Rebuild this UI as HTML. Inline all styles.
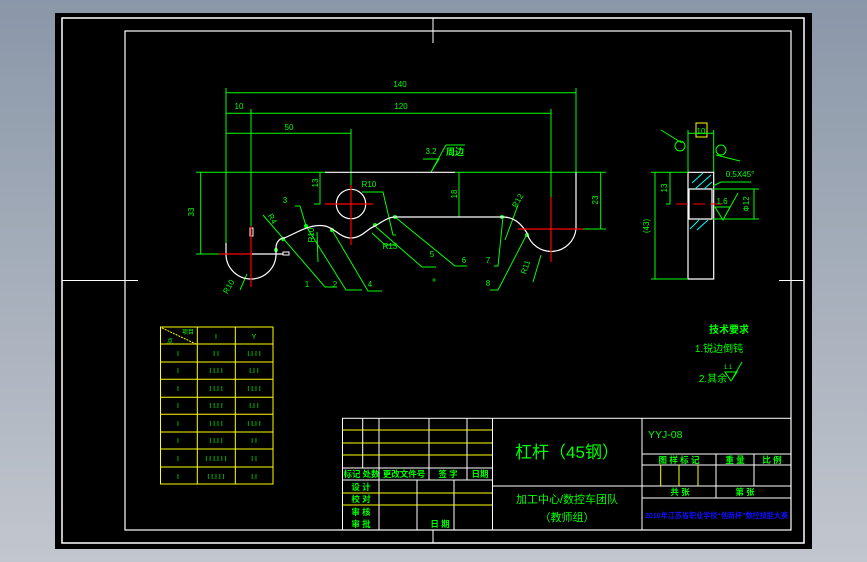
<!DOCTYPE html>
<html><head><meta charset="utf-8"><style>
html,body{margin:0;padding:0;width:867px;height:562px;overflow:hidden;background:linear-gradient(#8a97a8,#c2c6ce);}
svg{position:absolute;left:0;top:0}
text{font-family:"Liberation Sans","Noto Sans CJK SC",sans-serif;}
</style></head><body>
<svg width="867" height="562" viewBox="0 0 867 562" xmlns="http://www.w3.org/2000/svg">
<rect x="55" y="13" width="757" height="536" fill="#000"/>
<g fill="none" stroke="#fff">
<rect x="62" y="18" width="742" height="525" stroke-width="1.5"/>
<rect x="125" y="31" width="666" height="499" stroke-width="1.2"/>
<path d="M433 18V43M62 280.5H138M779 280.5H804M433 530V543"/>
</g>
<g stroke="#0f0" fill="none" stroke-width="1">
<path d="M226 88V243M576 88V172M226 92.7H576M251 109V226M551 109V197M226 113.3H551M351 129V189M226 133.3H351"/>
<path d="M196 172.3H325M455 172.3H606M196 254H219M583 229H606M200.7 172V254M600.7 172V229M320 172V204H314M459 172V217"/>
<path d="M423 159H439L431 172L446 145H465"/>
<path d="M362 192H383L393 235H396M295 206H300L306 226M263 215L325 287H337M306 226L346 290H362M332 230L368 291H382M376 227L422 267H436M395 217L455 266H467M503 217L498 266H494M527 234L498 290H490M518 205L505 240M541 255L533 282M240 290L247 274M317 232L318 262"/>
<path d="M372 233L385 245H397"/>
</g>
<g fill="#0f0">
<circle cx="276" cy="250" r="2"/><circle cx="283" cy="239" r="2"/><circle cx="306" cy="226" r="2"/><circle cx="332" cy="230" r="2"/><circle cx="375" cy="225" r="2"/><circle cx="395" cy="217" r="2"/><circle cx="502" cy="217" r="2"/><circle cx="527" cy="235" r="2"/>
</g>
<g fill="none" stroke="#fff" stroke-width="1.2">
<path d="M325 172.3H455M226 243V254A25 25 0 0 0 276 254V248C276 242 280 238 284 238C295 234 310 223 325 226C335 228 340 238 351 238C362 238 368 228 375 226C382 222 388 217 395 217H503C515 217 522 225 527 233A25 25 0 0 0 576 229V172M251 254H283"/>
<circle cx="351" cy="204" r="14.7"/>
<path d="M250 228h3v8h-3zM283 252h6v3h-6z" stroke-width="1"/>
</g>
<g stroke="#f00" stroke-width="1.2">
<path d="M219 254H252M251 226V287M325 204H373M351 185V245M518 229H583M551 197V262"/>
</g>
<g fill="#0f0" font-size="8" text-anchor="middle">
<text x="400" y="87">140</text><text x="239" y="109">10</text><text x="401" y="109">120</text><text x="289" y="130">50</text>
<text x="431" y="154">3.2</text><text x="455" y="155" font-size="9" font-weight="bold">周边</text>
<text x="369" y="187">R10</text><text x="390" y="249">R13</text>
<text x="285" y="203">3</text><text x="307" y="287">1</text><text x="335" y="287">2</text><text x="370" y="287">4</text>
<text x="432" y="257">5</text><text x="464" y="263">6</text><text x="488" y="263">7</text><text x="488" y="286">8</text>
<text transform="translate(318,183) rotate(-90)">13</text>
<text transform="translate(457,194) rotate(-90)">18</text>
<text transform="translate(194,212) rotate(-90)">33</text>
<text transform="translate(598,200) rotate(-90)">23</text>
<text transform="translate(314,235) rotate(-90)">R10</text>
<text transform="translate(270,220) rotate(60)">R4</text>
<text transform="translate(520,202) rotate(-60)">R12</text>
<text transform="translate(528,268) rotate(-70)">R11</text>
<text transform="translate(231,288) rotate(-60)">R10</text>
</g>
<rect x="433" y="279" width="2" height="2" fill="none" stroke="#0f0" stroke-width="0.6"/>
<g fill="none" stroke-width="1">
<rect x="696" y="123" width="11" height="14" stroke="#ff0"/>
<path d="M688 130V172.7M713.7 130V172.7M688 133.3H713.7" stroke="#0f0"/>
<path d="M688 172.3H713.7V279H688ZM689 189H712V219H689Z" stroke="#fff" stroke-width="1.2"/>
<path d="M692 183L703 173M695 189L711 175M704 189L712 182M690 229L699 220M697 230L708 220" stroke="#0ff"/>
<path d="M651 172.3H688M651 279H688M655 172V279M670 172V204H666M713 189H759M713 219H759M754 189V219M713 186L721 182H751M661 130L682 143M716 155L740 161" stroke="#0f0"/>
<circle cx="680" cy="146" r="5" stroke="#0f0"/><circle cx="721" cy="150" r="5" stroke="#0f0"/>
<path d="M715 207H730L723 220ZM723 220L738 193" stroke="#0f0"/>
<path d="M676 204H727" stroke="#f00" stroke-dasharray="12 5"/>
</g>
<g fill="#0f0" font-size="8" text-anchor="middle">
<text x="701" y="134">10</text><text x="740" y="177">0.5X45°</text><text x="722" y="204">1.6</text>
<text transform="translate(667,188) rotate(-90)">13</text>
<text transform="translate(649,226) rotate(-90)">(43)</text>
<text transform="translate(749,204) rotate(-90)">Φ12</text>
<text x="729" y="333" font-size="10" font-weight="bold">技术要求</text>
<text x="719" y="352" font-size="10">1.锐边倒钝</text>
<text x="713" y="382" font-size="10">2.其余</text>
<text x="728" y="369" font-size="6">1.1</text>
</g>
<path d="M725 372H737L731 381ZM731 381L742 362" fill="none" stroke="#0f0"/>
<g stroke="#ff0" fill="none" stroke-width="1">
<rect x="160.5" y="327" width="112.5" height="157"/>
<path d="M197.3 327V484M235.3 327V484M160 344H273M160 362H273M160 379.3H273M160 397.3H273M160 414.3H273M160 432H273M160 449H273M160 467H273"/>
<path d="M162 328L196 344" stroke-dasharray="2 1"/>
</g>
<g fill="#0f0" font-size="7" text-anchor="middle">
<text x="188" y="334" font-size="6">项目</text><text x="170" y="343" font-size="6">点</text>
<text x="216" y="339">I</text><text x="254" y="339">Y</text>
<text x="178" y="356">I</text><text x="216" y="356">I I</text><text x="254" y="356">I.I I I</text>
<text x="178" y="373">I</text><text x="216" y="373">I I.I I</text><text x="254" y="373">I.I I</text>
<text x="178" y="391">I</text><text x="216" y="391">I I.I I</text><text x="254" y="391">I I.I I</text>
<text x="178" y="408">I</text><text x="216" y="408">I I.I I</text><text x="254" y="408">I.I I</text>
<text x="178" y="426">I</text><text x="216" y="426">I I.I I</text><text x="254" y="426">I I.I I</text>
<text x="178" y="443">I</text><text x="216" y="443">I I.I I</text><text x="254" y="443">I I</text>
<text x="178" y="461">I</text><text x="216" y="461">I I I.I I I</text><text x="254" y="461">I I</text>
<text x="178" y="479">I</text><text x="216" y="479">I I.I I I</text><text x="254" y="479">I.I</text>
</g>
<g stroke="#fff" fill="none" stroke-width="1">
<rect x="342.5" y="418.3" width="448.5" height="111.7"/>
<path d="M362.7 418V468M379 418V530M429 418V480M467 418V480M492.5 418V530M642 418V530M342 468H492M342 480H492M417 480V530M454 480V530M492 486H642M642 454H791M642 465H791M642 486H791M642 498H791M716 454V498M754 454V486"/>
</g>
<g stroke="#ff0" stroke-width="1">
<path d="M342 430H492M342 443H492M342 455H492M342 493H492M342 505H492M660.7 465V486M679 465V486M698 465V486"/>
</g>
<g fill="#0f0" font-size="8.5" font-weight="bold" text-anchor="middle">
<text x="352" y="477">标记</text><text x="371" y="477">处数</text><text x="404" y="477">更改文件号</text><text x="448" y="477">签 字</text><text x="480" y="477">日期</text>
<text x="361" y="490">设 计</text><text x="361" y="502">校 对</text><text x="361" y="515">审 核</text><text x="361" y="527">审 批</text><text x="440" y="527">日 期</text>
<text x="567" y="458" font-size="17" font-weight="normal">杠杆（45钢）</text>
<text x="567" y="503" font-size="11" font-weight="normal">加工中心/数控车团队</text>
<text x="567" y="521" font-size="11" font-weight="normal">（教师组）</text>
<text x="679" y="463">图 样 标 记</text><text x="735" y="463">重 量</text><text x="772" y="463">比 例</text>
<text x="680" y="495">共    张</text><text x="745" y="495">第    张</text>
</g>
<text x="645" y="518" font-size="7.5" font-weight="bold" style="fill:#1010ff" textLength="143" lengthAdjust="spacingAndGlyphs">2010年江苏省职业学校“创新杯”数控技能大赛</text>
<text x="648" y="438" fill="#0f0" font-size="10.5" font-family="Liberation Sans,sans-serif">YYJ-08</text>
</svg>
</body></html>
